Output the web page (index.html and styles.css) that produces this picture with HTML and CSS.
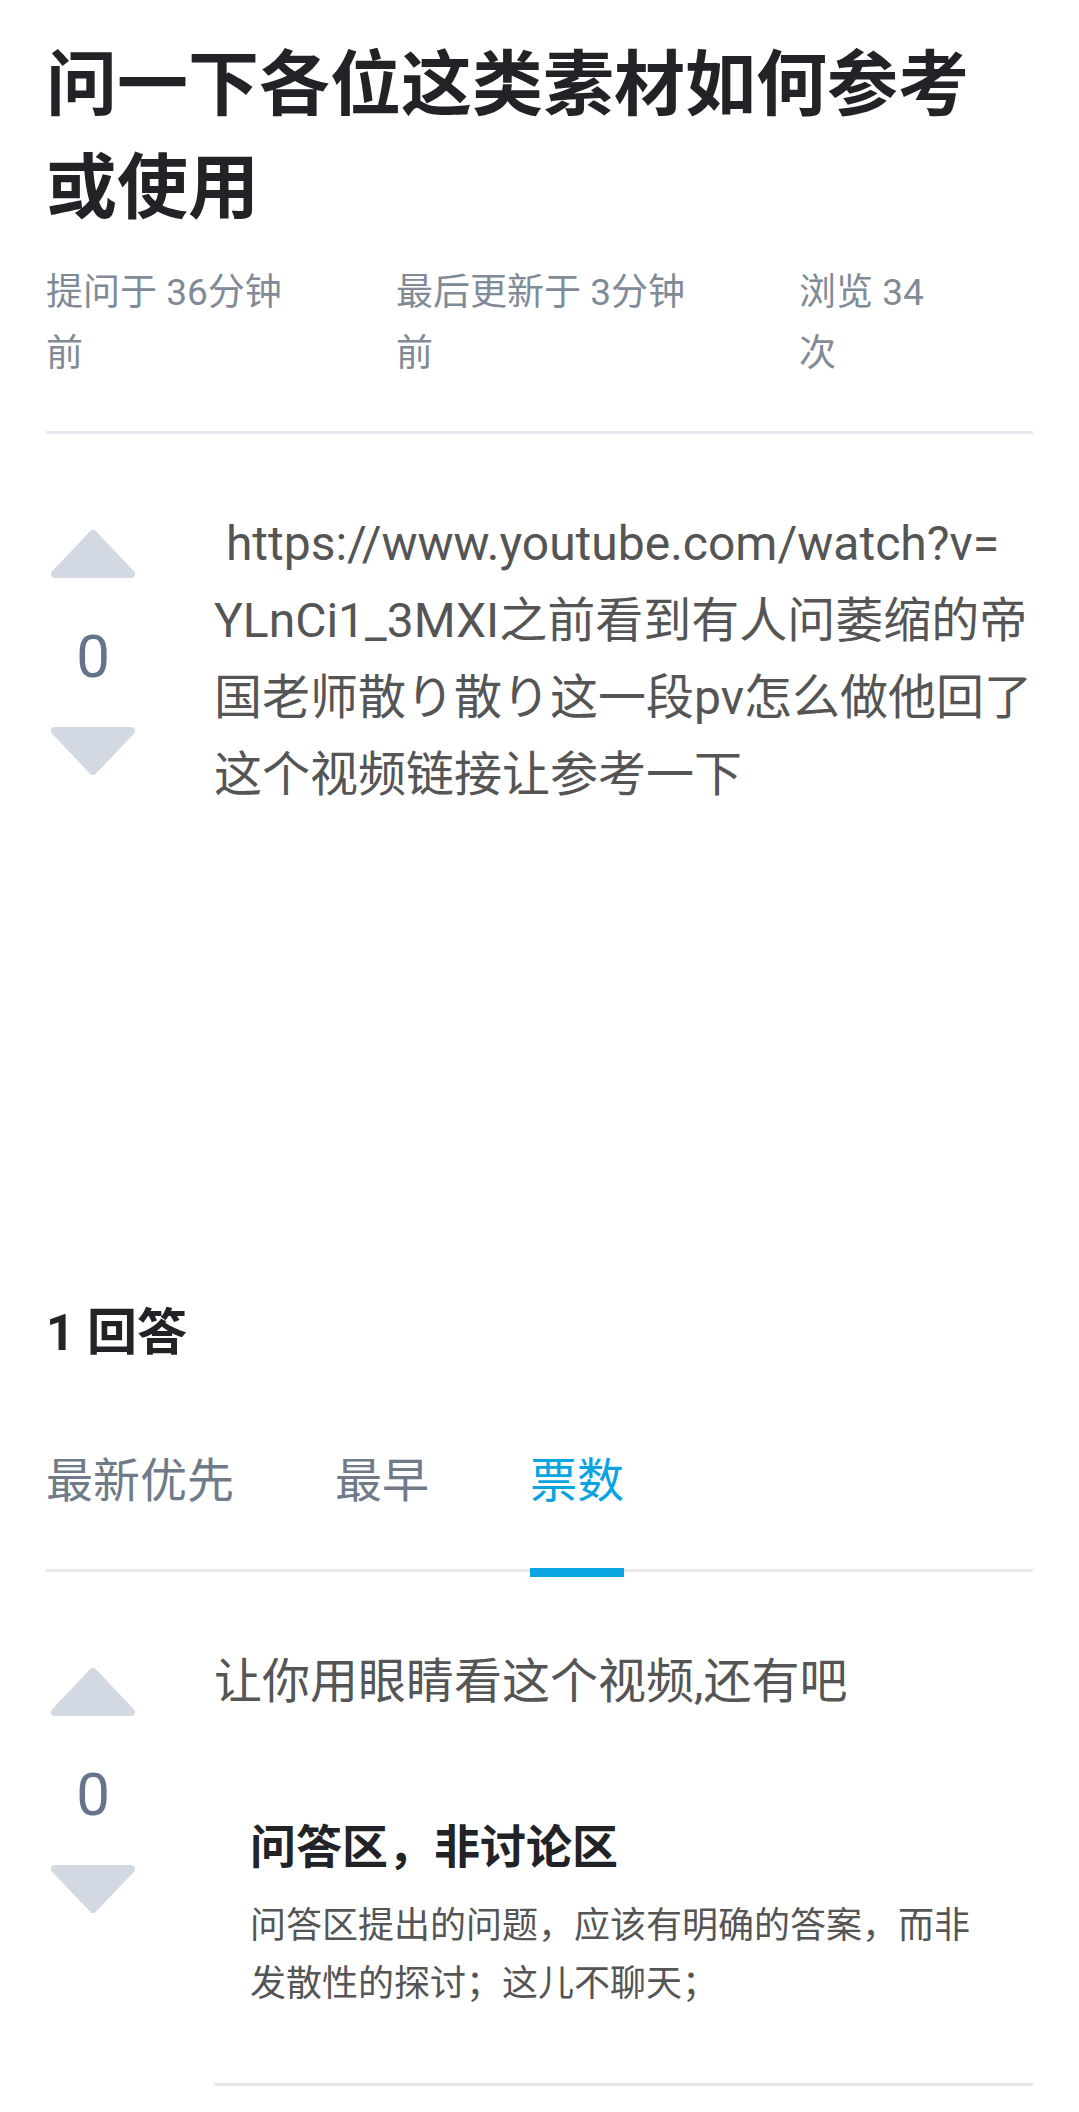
FILE: index.html
```html
<!DOCTYPE html>
<html lang="zh-CN">
<head>
<meta charset="utf-8">
<title>问一下各位这类素材如何参考或使用</title>
<link rel="stylesheet" href="styles.css">
</head>
<body>
<main class="page">
  <h1 class="title">问一下各位这类素材如何参考或使用</h1>
  <div class="meta">
    <span class="meta-item meta-asked">提问于 36分钟前</span>
    <span class="meta-item meta-updated">最后更新于 3分钟前</span>
    <span class="meta-item meta-views">浏览 34次</span>
  </div>

  <section class="post question">
    <div class="vote">
      <svg class="arrow" viewBox="0 0 84 48" aria-hidden="true"><polygon points="42,4 80,44 4,44" /></svg>
      <div class="count">0</div>
      <svg class="arrow" viewBox="0 0 84 48" aria-hidden="true"><polygon points="4,4 80,4 42,44" /></svg>
    </div>
    <div class="post-body">
      <p class="text">&nbsp;https://www.youtube.com/watch?v=<wbr>YLnCi1_3MXI之前看到有人问萎缩的帝国老师散り散り这一段pv怎么做他回了这个视频链接让参考一下</p>
    </div>
  </section>

  <h2 class="answers-title">1 回答</h2>

  <nav class="tabs">
    <span class="tab">最新优先</span>
    <span class="tab">最早</span>
    <span class="tab active">票数</span>
  </nav>

  <section class="post answer">
    <div class="vote">
      <svg class="arrow" viewBox="0 0 84 48" aria-hidden="true"><polygon points="42,4 80,44 4,44" /></svg>
      <div class="count">0</div>
      <svg class="arrow" viewBox="0 0 84 48" aria-hidden="true"><polygon points="4,4 80,4 42,44" /></svg>
    </div>
    <div class="post-body">
      <p class="text">让你用眼睛看这个视频,还有吧</p>
      <div class="notice">
        <h3 class="notice-title">问答区，非讨论区</h3>
        <p class="notice-text">问答区提出的问题，应该有明确的答案，而非发散性的探讨；这儿不聊天；</p>
      </div>
      <div class="divider"></div>
    </div>
  </section>
</main>
</body>
</html>
```

FILE: styles.css
```css
* {
  box-sizing: border-box;
}

html, body {
  margin: 0;
  padding: 0;
  background: #ffffff;
}

body {
  font-family: Roboto, "Noto Sans CJK SC", "Noto Sans", sans-serif;
  color: #222;
}

.page {
  padding: 0 46px;
}

.title {
  margin: 0;
  padding-top: 33px;
  font-size: 71px;
  line-height: 103px;
  font-weight: 700;
  color: #222326;
}

.meta {
  display: flex;
  gap: 90px;
  margin-top: 23px;
  padding-bottom: 47px;
  border-bottom: 3px solid #e6e8ee;
  font-size: 37px;
  line-height: 61px;
  color: #808b97;
}

.meta-asked { width: 260px; }
.meta-updated { width: 313px; }
.meta-views { width: 140px; }

.post {
  display: flex;
  gap: 74px;
}

.question {
  padding-top: 71px;
  margin-right: -4px;
}

.vote {
  width: 94px;
  flex: none;
  display: flex;
  flex-direction: column;
  align-items: center;
  padding-top: 25px;
}

.arrow {
  width: 84px;
  height: 48px;
  display: block;
}

.arrow polygon {
  fill: #d2d9e2;
  stroke: #d2d9e2;
  stroke-width: 8;
  stroke-linejoin: round;
}

.count {
  height: 149px;
  padding-top: 8px;
  display: flex;
  align-items: center;
  justify-content: center;
  font-size: 60px;
  color: #64748b;
}

.post-body {
  flex: 1;
  min-width: 0;
}

.text {
  margin: 0;
  font-size: 48px;
  line-height: 77px;
  color: #555555;
  overflow-wrap: anywhere;
}

.answers-title {
  margin: 484px 0 0;
  font-size: 50px;
  line-height: 72px;
  font-weight: 700;
  color: #222326;
}

.tabs {
  display: flex;
  gap: 101px;
  margin-top: 78px;
  padding-bottom: 54px;
  border-bottom: 3px solid #e6e8ee;
  font-size: 47px;
  line-height: 68px;
  color: #6f7b89;
}

.tab {
  position: relative;
}

.tab.active {
  color: #0aa5e0;
}

.tab.active::after {
  content: "";
  position: absolute;
  left: 0;
  right: 0;
  bottom: -62px;
  height: 9px;
  background: #0aa5e0;
}

.answer {
  padding-top: 71px;
}

.notice {
  margin-top: 95px;
  padding: 0 36px;
}

.notice-title {
  margin: 0;
  font-size: 46px;
  line-height: 64px;
  font-weight: 700;
  color: #222326;
}

.notice-text {
  margin: 18px 0 0;
  font-size: 36px;
  line-height: 58px;
  color: #555555;
}

.divider {
  margin-top: 70px;
  height: 3px;
  background: #e6e8ee;
}
```
